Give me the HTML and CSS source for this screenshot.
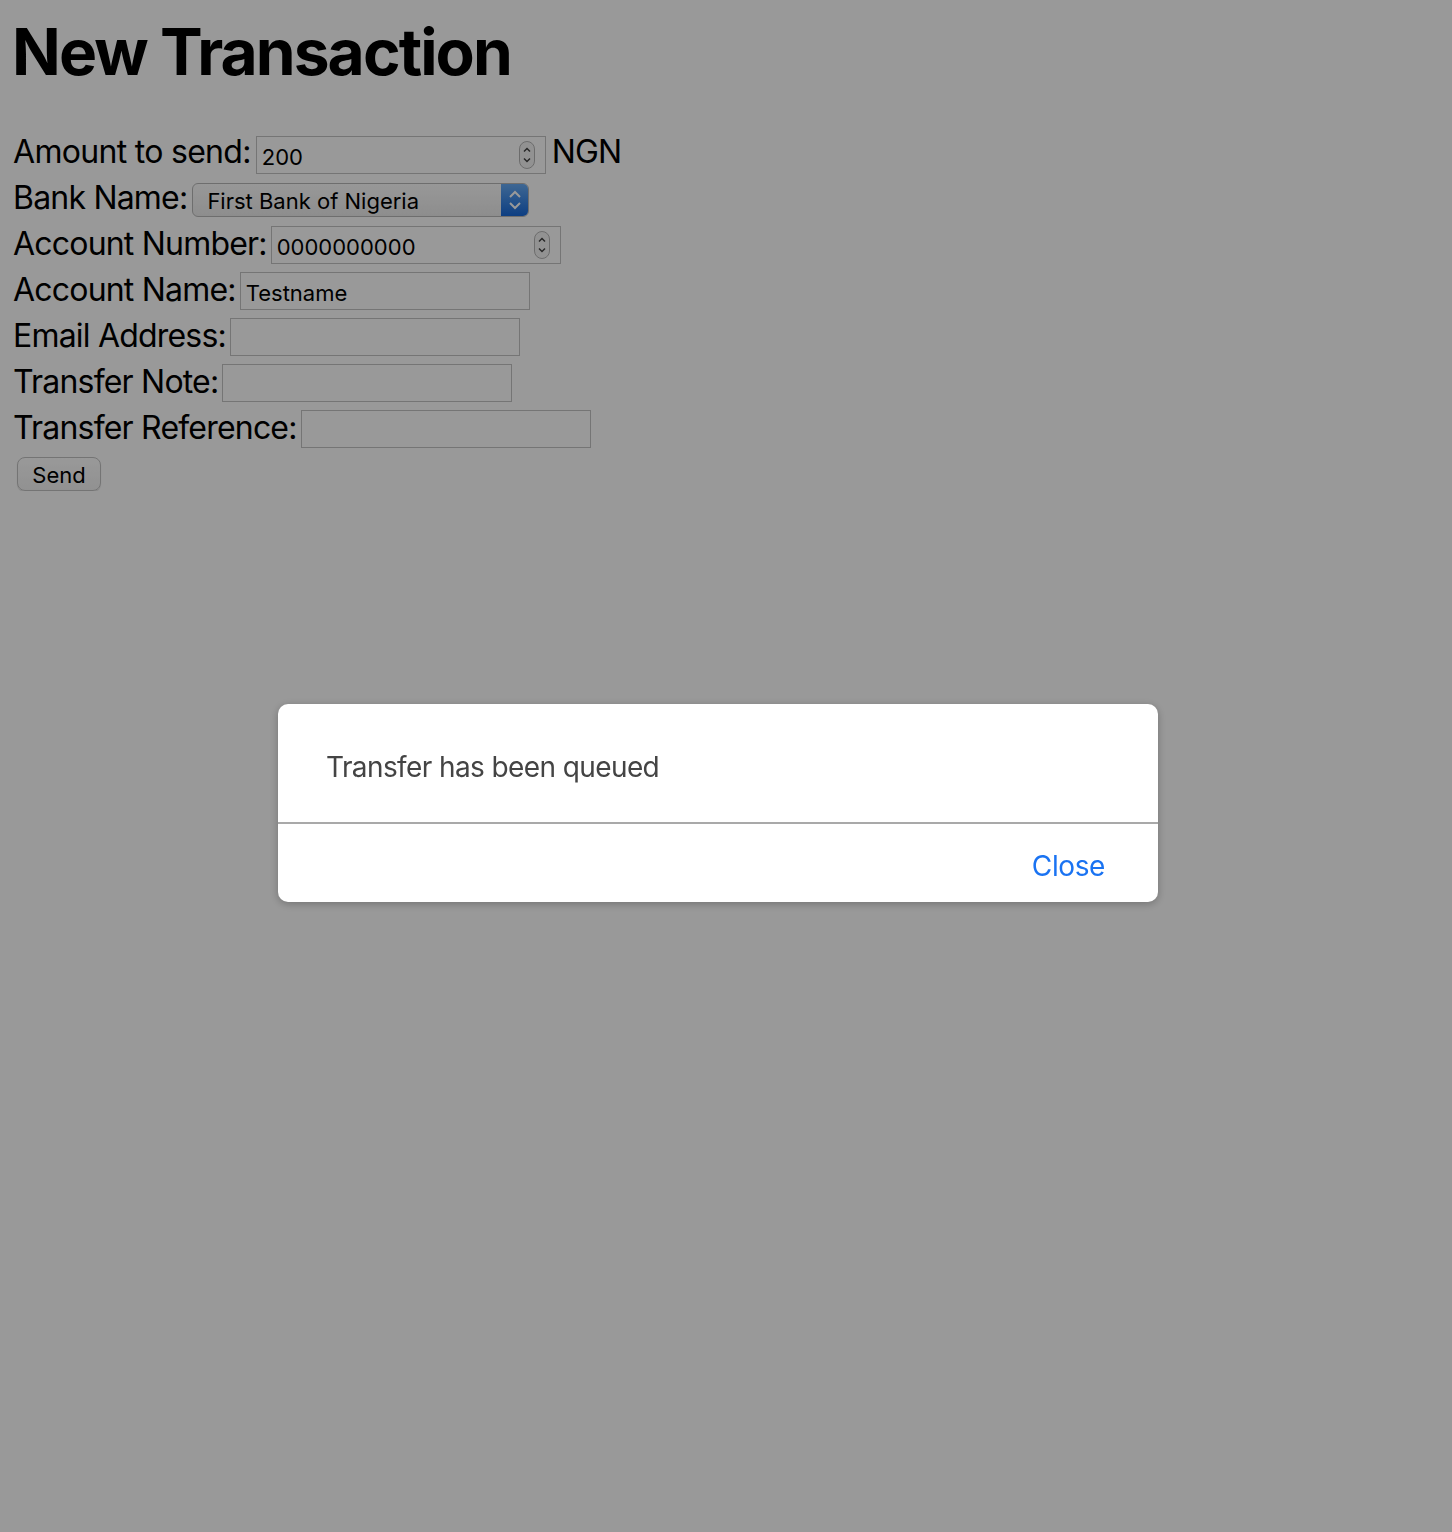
FILE: index.html
```html
<!DOCTYPE html>
<html>
<head>
<meta charset="utf-8">
<title>New Transaction</title>
<link rel="stylesheet" href="styles.css">
</head>
<body>
<main class="page">
  <h1 class="title">New Transaction</h1>
  <form class="form">
    <div class="row row-amount">
      <label class="label">Amount to send:</label>
      <div class="field">
        <input class="input" type="text" value="200">
        <svg class="spin" width="16" height="28" viewBox="0 0 16 28"><rect x="0.5" y="0.5" width="15" height="27" rx="7.5" fill="#f4f4f4" stroke="#b5b5b5"/><path d="M5 10.5 L8 7.5 L11 10.5" fill="none" stroke="#444" stroke-width="1.5"/><path d="M5 17.5 L8 20.5 L11 17.5" fill="none" stroke="#444" stroke-width="1.5"/></svg>
      </div>
      <span class="unit">NGN</span>
    </div>
    <div class="row row-select">
      <label class="label">Bank Name:</label>
      <div class="select">
        <span class="select-text">First Bank of Nigeria</span>
        <span class="select-arrow"><svg width="28" height="34" viewBox="0 0 28 34"><path d="M9 14 L14 9 L19 14" fill="none" stroke="#fff" stroke-width="2"/><path d="M9 20 L14 25 L19 20" fill="none" stroke="#fff" stroke-width="2"/></svg></span>
      </div>
    </div>
    <div class="row">
      <label class="label">Account Number:</label>
      <div class="field">
        <input class="input" type="text" value="0000000000">
        <svg class="spin" width="16" height="28" viewBox="0 0 16 28"><rect x="0.5" y="0.5" width="15" height="27" rx="7.5" fill="#f4f4f4" stroke="#b5b5b5"/><path d="M5 10.5 L8 7.5 L11 10.5" fill="none" stroke="#444" stroke-width="1.5"/><path d="M5 17.5 L8 20.5 L11 17.5" fill="none" stroke="#444" stroke-width="1.5"/></svg>
      </div>
    </div>
    <div class="row">
      <label class="label">Account Name:</label>
      <div class="field"><input class="input" type="text" value="Testname"></div>
    </div>
    <div class="row">
      <label class="label">Email Address:</label>
      <div class="field"><input class="input" type="text" value=""></div>
    </div>
    <div class="row">
      <label class="label">Transfer Note:</label>
      <div class="field"><input class="input" type="text" value=""></div>
    </div>
    <div class="row">
      <label class="label">Transfer Reference:</label>
      <div class="field"><input class="input" type="text" value=""></div>
    </div>
    <div class="actions">
      <button class="btn" type="button">Send</button>
    </div>
  </form>
</main>
<div class="overlay">
  <div class="dialog">
    <div class="dialog-body">Transfer has been queued</div>
    <div class="dialog-foot"><span class="close">Close</span></div>
  </div>
</div>
</body>
</html>
```
FILE: styles.css
```css
html, body {
  margin: 0;
  padding: 0;
  background: #ffffff;
}
body {
  font-family: Inter, "Noto Sans", sans-serif;
  color: #000;
}
.page {
  padding: 0 12px;
}
.title {
  margin: 14px 0 0;
  font-size: 64px;
  line-height: 76px;
  font-weight: 700;
  letter-spacing: -1.9px;
}
.form {
  margin-top: 46px;
  display: flex;
  flex-direction: column;
  gap: 8px;
}
.row {
  display: flex;
  align-items: center;
  gap: 4px;
  height: 38px;
}
.row-select {
  height: 36px;
}
.label {
  font-size: 32px;
  line-height: 38px;
  padding-bottom: 3px;
  margin-left: 1px;
  letter-spacing: -0.8px;
}
.row-amount {
  gap: 5px;
}
.row-amount .label {
  padding-bottom: 6px;
  letter-spacing: -0.7px;
}
.row-select .label {
  padding-bottom: 4px;
}
.field {
  width: 290px;
  height: 38px;
  box-sizing: border-box;
  border: 1px solid #c4c4c4;
  background: #fff;
  display: flex;
  align-items: center;
  padding: 0 10px 0 5px;
}
.input {
  flex: 1;
  min-width: 0;
  border: none;
  outline: none;
  background: transparent;
  font-family: Inter, "Noto Sans", sans-serif;
  font-size: 22px;
  padding: 4px 0 0;
  margin: 0;
  color: #000;
}
.spin {
  flex: none;
  display: block;
}
.unit {
  font-size: 32px;
  line-height: 38px;
  padding-bottom: 6px;
  margin-left: 1px;
  letter-spacing: -0.8px;
}
.select {
  margin-left: 1px;
  width: 337px;
  height: 34px;
  box-sizing: border-box;
  border: 1px solid #b8b8b8;
  border-radius: 6px;
  background: linear-gradient(#fdfdfd, #ececec);
  display: flex;
  align-items: center;
  overflow: hidden;
}
.select-text {
  flex: 1;
  font-size: 22px;
  padding: 2px 0 0 14px;
}
.select-arrow {
  flex: none;
  width: 28px;
  height: 34px;
  margin: -1px -1px -1px 0;
  background: linear-gradient(#6aaef6, #1466d8);
  border-radius: 0 6px 6px 0;
  display: block;
}
.select-arrow svg {
  display: block;
}
.actions {
  margin-top: 1px;
  padding-left: 5px;
}
.btn {
  width: 84px;
  height: 34px;
  border: 1px solid #c2c2c2;
  border-radius: 8px;
  background: linear-gradient(#ffffff, #f2f2f2);
  font-family: Inter, "Noto Sans", sans-serif;
  font-size: 22px;
  color: #000;
  padding: 2px 0 0;
  box-shadow: 0 1px 1px rgba(0,0,0,0.15);
}
.overlay {
  position: fixed;
  inset: 0;
  background: rgba(0, 0, 0, 0.4);
  display: flex;
  justify-content: center;
  align-items: flex-start;
  padding: 704px 16px 0 0;
}
.dialog {
  width: 880px;
  background: #fff;
  border-radius: 10px;
  box-shadow: 0 2px 8px rgba(0,0,0,0.25);
  overflow: hidden;
}
.dialog-body {
  height: 120px;
  box-sizing: border-box;
  padding: 8px 48px 0;
  display: flex;
  align-items: center;
  font-size: 28px;
  color: #444;
  letter-spacing: -0.6px;
  border-bottom: 2px solid #a9a9a9;
}
.dialog-foot {
  height: 78px;
  display: flex;
  align-items: center;
  justify-content: flex-end;
  padding: 0 53px;
}
.close {
  font-size: 28px;
  color: #1a73f2;
  padding-top: 6px;
  letter-spacing: -0.4px;
}
```
